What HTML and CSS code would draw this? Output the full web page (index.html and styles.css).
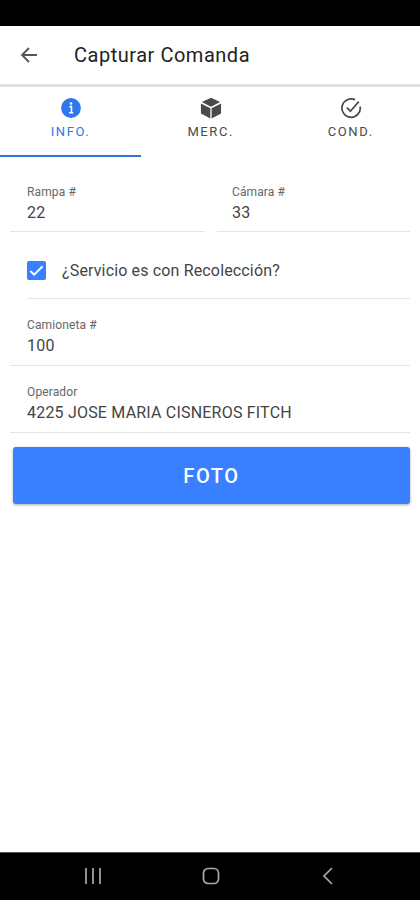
FILE: index.html
```html
<!DOCTYPE html>
<html lang="es">
<head>
<meta charset="utf-8">
<meta name="viewport" content="width=device-width, initial-scale=1">
<title>Capturar Comanda</title>
<link rel="stylesheet" href="styles.css">
</head>
<body>
<div class="status"></div>
<header class="toolbar">
  <svg class="back" viewBox="0 0 20 20"><path d="M18 10H3.500M10 3L3 10l7 7"/></svg>
  <h1>Capturar Comanda</h1>
</header>
<nav class="tabs">
  <div class="tab active">
    <svg viewBox="0 0 24 24"><circle cx="12" cy="12" r="10.800" fill="currentColor"/><path d="M10.300 10.500h2.200v6.500M10 17.200h4.500" stroke="#fff" stroke-width="1.700" fill="none"/><circle cx="12" cy="7" r="1.400" fill="#fff"/></svg>
    <span>INFO.</span>
  </div>
  <div class="tab">
    <svg viewBox="0 0 24 24"><path fill="currentColor" d="M12 .7l10 4.700-10 5.100L2 5.400zM1 7l10.300 5.200v11.300L1 18zM23 7l-10.300 5.200v11.300L23 18z"/></svg>
    <span>MERC.</span>
  </div>
  <div class="tab">
    <svg viewBox="0 0 24 24"><path d="M22 10.500A10 10 0 1 1 16.500 3.100M7.500 11.500l3.800 4L20.500 5" fill="none" stroke="currentColor" stroke-width="1.900"/></svg>
    <span>COND.</span>
  </div>
</nav>
<main>
  <div class="row">
    <div class="field"><label>Rampa #</label><p>22</p></div>
    <div class="field"><label>Cámara #</label><p>33</p></div>
  </div>
  <div class="check">
    <svg viewBox="0 0 20 20"><rect width="20" height="20" rx="2" fill="#3880ff"/><path d="M3.500 10.500l4 4L16.500 5.500" fill="none" stroke="#fff" stroke-width="2"/></svg>
    <span>¿Servicio es con Recolección?</span>
  </div>
  <div class="field van"><label>Camioneta #</label><p>100</p></div>
  <div class="field operator"><label>Operador</label><p>4225 JOSE MARIA CISNEROS FITCH</p></div>
  <button>FOTO</button>
</main>
<footer class="navbar">
  <svg viewBox="0 0 20 20"><path d="M3 2v16M10 2v16M17 2v16"/></svg>
  <svg viewBox="0 0 20 20"><rect x="2.500" y="2.500" width="15" height="15" rx="4.500"/></svg>
  <svg viewBox="0 0 20 20"><path d="M14 2L6 10l8 8"/></svg>
</footer>
</body>
</html>
```
FILE: styles.css
```css
* { box-sizing: border-box; }
body { margin: 0; height: 900px; display: flex; flex-direction: column; background: #fff; color: #444; font-family: Roboto, "Liberation Sans", sans-serif; overflow: hidden; }
h1, p { margin: 0; }
.status { height: 26px; background: #000; }
.toolbar { height: 61px; display: flex; align-items: center; padding-left: 19px; border-bottom: 3px solid #e0e0e0; }
.back { width: 20px; height: 20px; margin-right: 35px; fill: none; stroke: #555; stroke-width: 1.800; }
h1 { font-size: 20px; font-weight: 400; line-height: 24px; letter-spacing: .52px; color: #222; }
.tabs { height: 70px; display: grid; grid-template-columns: 141px 1fr 1fr; }
.tab { display: flex; flex-direction: column; align-items: center; padding-top: 10px; color: #4a4a4a; font-size: 13px; line-height: 16px; letter-spacing: 1.600px; }
.tab svg { width: 22px; height: 22px; margin-bottom: 5px; }
.tab:last-child { padding-left: 1px; }
.tab.active { color: #2f77ee; border-bottom: 2px solid #3273d8; }
main { flex: 1; padding: 0 10px; }
.row { display: grid; grid-template-columns: 195px 193px; gap: 12px; margin-top: 17px; }
.field { height: 58px; padding: 10px 0 0 17px; border-bottom: 1px solid #e6e6e6; }
.field label { display: block; font-size: 12px; line-height: 16px; letter-spacing: .12px; color: #666; }
.field p { font-size: 16px; line-height: 20px; margin-top: 3px; letter-spacing: .2px; }
.row .field + .field { padding-left: 15px; }
.check { margin-left: 17px; height: 67px; display: flex; align-items: center; padding-top: 10px; border-bottom: 1px solid #e6e6e6; font-size: 16px; letter-spacing: .15px; }
.check svg { width: 19px; height: 19px; margin-right: 16px; }
.van, .operator { height: 67px; padding-top: 18px; }
button { display: block; width: 397px; height: 57px; margin: 14px 0 0 3px; padding: 0; border: 0; border-radius: 3px; background: #3880ff; color: #fff; font: 500 20px Roboto, sans-serif; letter-spacing: 1.600px; box-shadow: 0 1px 3px #0005; }
.navbar { height: 48px; background: #000; border-top: 1px solid #555; display: flex; justify-content: space-between; align-items: center; padding: 0 82px 1px 83px; }
.navbar svg { width: 20px; height: 20px; fill: none; stroke: #aaa; stroke-width: 1.700; }
```
